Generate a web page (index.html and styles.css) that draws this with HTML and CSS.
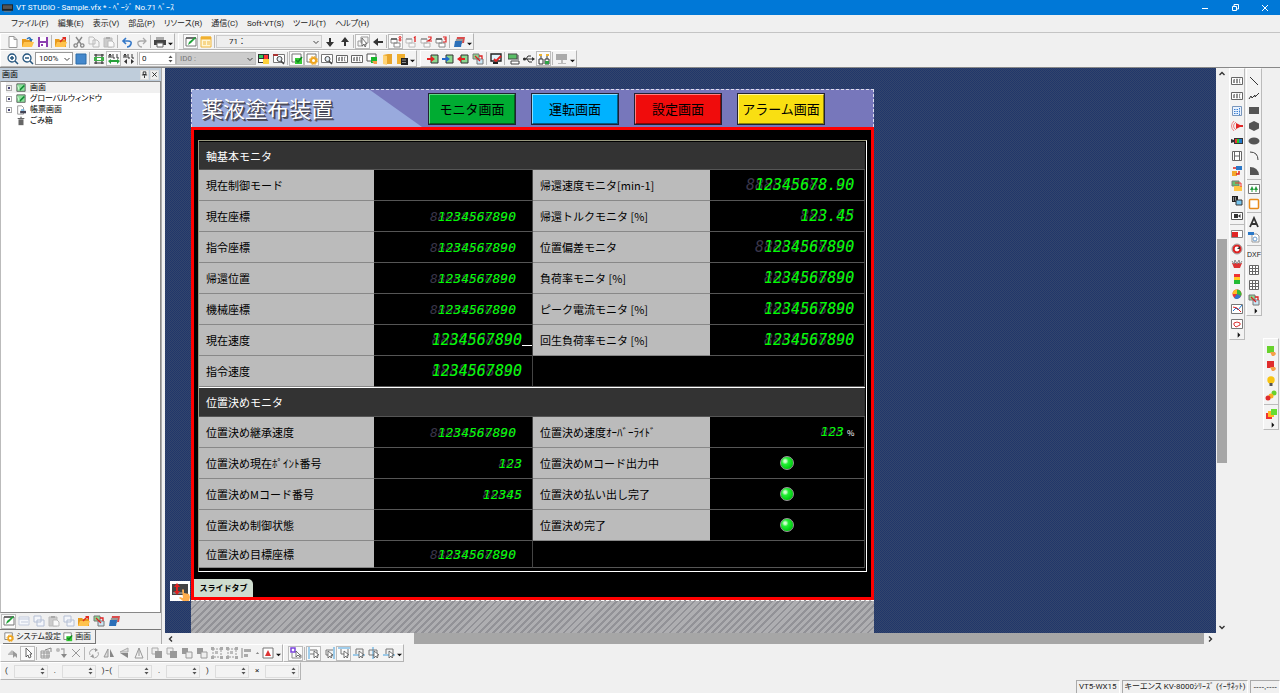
FILE: index.html
```html
<!DOCTYPE html>
<html lang="ja">
<head>
<meta charset="utf-8">
<title>VT STUDIO</title>
<link rel="stylesheet" href="styles.css">
</head>
<body>
<svg class="defs" aria-hidden="true">
<defs>
<symbol id="new" viewBox="0 0 12 12"><path d="M2 .5h5l3 3v8H2zM7 .5v3h3" fill="#fff" stroke="#999"/></symbol>
<symbol id="open" viewBox="0 0 12 12"><path d="M0 3h4l1 1h5v7H0z" fill="#e79a1c"/><path d="M2 6h10l-2 5H0z" fill="#ffc34d"/><path d="M5 3q3-3 4 1" fill="none" stroke="#2672b8" stroke-width="1.5"/><path d="M7 3h4L9 6z" fill="#2672b8"/></symbol>
<symbol id="save" viewBox="0 0 12 12"><path d="M1 1h10v10H1z" fill="#8c3fb0"/><path d="M3 1h6v4H3zM3 7h6v4H3z" fill="#fff"/><path d="M4 8h2v2H4z" fill="#8c3fb0"/></symbol>
<symbol id="folder" viewBox="0 0 12 12"><path d="M0 3h4l1 1h6v7H0z" fill="#e79a1c"/><path d="M2 6h10l-2 5H0z" fill="#ffc34d"/><path d="M5 6l4-4" stroke="#e02c20" stroke-width="1.500"/><path d="M7 1h4v4z" fill="#e02c20"/></symbol>
<symbol id="cut" viewBox="0 0 12 12"><path d="M3 1l5 7M9 1L4 8" stroke="#888" stroke-width="1.4"/><g fill="none" stroke="#888" stroke-width="1.3"><circle cx="2.700" cy="9.500" r="1.700"/><circle cx="9.300" cy="9.500" r="1.700"/></g></symbol>
<symbol id="copy" viewBox="0 0 12 12"><path d="M1 1h4l2 2v5H1zM5 4h4l2 2v5H5z" fill="#f4f4f4" stroke="#bbb"/></symbol>
<symbol id="paste" viewBox="0 0 12 12"><path d="M1 2h8v9H1z" fill="#ccc" stroke="#bbb"/><path d="M3 1h4v2H3z" fill="#aaa"/><path d="M5 5h4l2 2v4H5z" fill="#fafafa" stroke="#bbb"/></symbol>
<symbol id="undo" viewBox="0 0 12 12"><path d="M2 5h5q4 0 3 3-1 3-4 3M5 2L2 5l3 3" fill="none" stroke="#3478c8" stroke-width="1.600"/></symbol>
<symbol id="redo" viewBox="0 0 12 12"><path d="M10 5H5Q1 5 2 8q1 3 4 3M7 2l3 3-3 3" fill="none" stroke="#aaa" stroke-width="1.300"/></symbol>
<symbol id="print" viewBox="0 0 12 12"><path d="M2 1h8v3H2z" fill="#aaa"/><path d="M0 4h12v5H0z" fill="#444"/><path d="M3 7h6v4H3z" fill="#fff" stroke="#666"/></symbol>
<symbol id="edit" viewBox="0 0 12 12"><path d="M1 2h10v8H1z" fill="#fff" stroke="#777"/><path d="M1 2h10" stroke="#555" stroke-width="1.500"/><path d="M3 9l1-3 6-5 1 1-5 5z" fill="#22a33a"/></symbol>
<symbol id="grid" viewBox="0 0 12 12"><path d="M1 1h10v10H1z" fill="#fff6d5" stroke="#f0b840"/><path d="M1 2h10" stroke="#f0b030" stroke-width="3"/><path d="M3 6h3M7 6h3M3 8h3M7 8h3" stroke="#f0b840"/></symbol>
<symbol id="down" viewBox="0 0 12 12"><path d="M5 2h2v4h3l-4 5-4-5h3z" fill="#333"/></symbol>
<symbol id="up" viewBox="0 0 12 12"><path d="M5 10h2V6h3L6 1 2 6h3z" fill="#333"/></symbol>
<symbol id="left" viewBox="0 0 12 12"><path d="M11 5v2H6v3L1 6l5-4v3z" fill="#333"/></symbol>
<symbol id="pick" viewBox="0 0 12 12"><path d="M4 1h7v6H4zM1 5h5v5H1z" fill="#f4f4f4" stroke="#999"/><path d="M5 2v8l2-2 1 3 1-1-1-2h2z" fill="#fff" stroke="#555" stroke-width=".8"/></symbol>
<symbol id="win" viewBox="0 0 12 12"><path d="M1 3h6v4H1zM4 7h6v4H4z" fill="#fff" stroke="#888"/><path d="M1 3h6" stroke="#555" stroke-width="1.500"/></symbol>
<symbol id="n8" viewBox="0 0 12 12"><use href="#win"/><circle cx="10" cy="1.500" r="1" fill="none" stroke="#e02020"/><circle cx="10" cy="4" r="1" fill="none" stroke="#e02020"/></symbol>
<symbol id="n1" viewBox="0 0 12 12"><use href="#win" opacity=".5"/><path d="M9 2l1-1v5" fill="none" stroke="#e02020" stroke-width="1.300"/></symbol>
<symbol id="n2" viewBox="0 0 12 12"><use href="#win" opacity=".6"/><path d="M8 1h3v2L8 5h4" fill="none" stroke="#e02020" stroke-width="1.200"/></symbol>
<symbol id="n3" viewBox="0 0 12 12"><use href="#win"/><path d="M8 1h3v2H9h2v3H8" fill="none" stroke="#e02020" stroke-width="1.200"/></symbol>
<symbol id="layers" viewBox="0 0 12 12"><path d="M4 1h8l-1 6H3z" fill="#d94c4c"/><path d="M3 3h7L9 8H2z" fill="#999"/><path d="M2 5h7l-1 6H1z" fill="#2b6fb8"/></symbol>
<symbol id="zin" viewBox="0 0 12 12"><circle cx="5" cy="5" r="4" fill="#fff" stroke="#25557e" stroke-width="1.300"/><path d="M8 8l3 3M3 5h4M5 3v4" stroke="#25557e" stroke-width="1.500"/></symbol>
<symbol id="zout" viewBox="0 0 12 12"><circle cx="5" cy="5" r="4" fill="#fff" stroke="#25557e" stroke-width="1.300"/><path d="M8 8l3 3M3 5h4" stroke="#25557e" stroke-width="1.500"/></symbol>
<symbol id="blue" viewBox="0 0 12 12"><path d="M1 1h10v10H1z" fill="#4488cc" stroke="#2d6ca8"/></symbol>
<symbol id="fit" viewBox="0 0 12 12"><path d="M1 2h10M1 10h10M3 1v10M9 1v10" stroke="#333" stroke-width="1.200"/><path d="M1 4h10v4H1z" fill="#3fae49"/><path d="M4 5h4v2H4z" fill="#fff"/></symbol>
<symbol id="all" viewBox="0 0 12 12"><path d="M1 5V2l1-1 1 1v3M1 3h2M5 1v4h2M9 1v4h2" fill="none" stroke="#333"/><path d="M0 8l3-2v1h6V6l3 2-3 3V9H3v2z" fill="#239f38"/></symbol>
<symbol id="all2" viewBox="0 0 12 12"><path d="M1 5V2l1-1 1 1v3M1 3h2M5 1v4h2M9 1v4h2" fill="none" stroke="#333"/><path d="M4 6v5L1 8.500zM8 6v5l3-2.500z" fill="#333"/></symbol>
<symbol id="parts" viewBox="0 0 12 12"><path d="M0 1h11v9H0z" fill="#333"/><path d="M1 2h4v3H1z" fill="#36c85a"/><path d="M6 2h4v4H6z" fill="#f33"/><path d="M1 6h4v3H1z" fill="#fff"/><path d="M5 6h6v5H5z" fill="#ffd23c"/></symbol>
<symbol id="find" viewBox="0 0 12 12"><path d="M.5 1.500h11v8H.5z" fill="#fff" stroke="#777"/><circle cx="6.500" cy="6" r="2.500" fill="#e4edf4" stroke="#444"/><path d="M8 8l3 3" stroke="#444" stroke-width="1.500"/></symbol>
<symbol id="find2" viewBox="0 0 12 12"><use href="#find"/><path d="M0 2h5" stroke="#a33" stroke-width="2"/></symbol>
<symbol id="check" viewBox="0 0 12 12"><path d="M1 1h9v8H1z" fill="#fff" stroke="#777"/><path d="M4 5h7v6H4z" fill="#36c936"/><path d="M5 7l2 2 4-5" fill="none" stroke="#108522" stroke-width="1.500"/></symbol>
<symbol id="gear" viewBox="0 0 12 12"><path d="M1 1h9v8H1z" fill="#fff" stroke="#777"/><circle cx="7.500" cy="7.500" r="2.500" fill="#fff" stroke="#efa51d" stroke-width="2"/><circle cx="7.500" cy="7.500" r="4" fill="none" stroke="#efa51d" stroke-dasharray="2 1.100"/></symbol>
<symbol id="abc" viewBox="0 0 12 12"><path d="M.5 2.500h11v7H.5z" fill="#fff" stroke="#666"/><path d="M2.500 8V5l1-1v4M5.500 4v4h1V4zM9.500 4h-1v4h1" fill="none" stroke="#777" stroke-width=".8"/></symbol>
<symbol id="hand" viewBox="0 0 12 12"><path d="M1 1h9v7H1z" fill="#fff" stroke="#555"/><path d="M5 4h6v6H5z" fill="#17b62b"/><path d="M6 8l5 0v3H8z" fill="#f5a04a"/></symbol>
<symbol id="book" viewBox="0 0 12 12"><path d="M2 2l5-1h4v10H2z" fill="#e8a52c"/><path d="M2 2l4 1v9l-4-1z" fill="#ffd375"/></symbol>
<symbol id="book2" viewBox="0 0 12 12"><path d="M1 1h8v10H1z" fill="#f0b030"/><path d="M5 5h7v7H5z" fill="#222"/><path d="M6.500 7h4M6.500 9.500h4" stroke="#fff" stroke-dasharray="1 1"/></symbol>
<symbol id="toin" viewBox="0 0 12 12"><path d="M4 2h7v8H4z" fill="#8bd88f" stroke="#333"/><path d="M0 5h4V3l4 3-4 3V7H0z" fill="#e32222"/></symbol>
<symbol id="toblue" viewBox="0 0 12 12"><path d="M4 2h7v8H4z" fill="#8bd88f" stroke="#333"/><path d="M0 5h4V3l4 3-4 3V7H0z" fill="#2468c8"/></symbol>
<symbol id="toout" viewBox="0 0 12 12"><path d="M4 2h7v8H4z" fill="#8bd88f" stroke="#333"/><path d="M8 5H4V3L0 6l4 3V7h4z" fill="#e32222"/></symbol>
<symbol id="swap" viewBox="0 0 12 12"><path d="M1 1h6v5H1z" fill="#8bd88f" stroke="#777"/><path d="M5 6h6v5H5z" fill="#c9e5f4" stroke="#777"/><path d="M3 3l5 5M7 3h3v3" stroke="#d22" stroke-width="1.300" fill="none"/></symbol>
<symbol id="mon" viewBox="0 0 12 12"><path d="M1 1h10v7H1z" fill="#dff3fb" stroke="#222" stroke-width="1.400"/><path d="M3 10h5" stroke="#222" stroke-width="2"/><path d="M4 6l2 2 5-5" fill="none" stroke="#d22" stroke-width="1.800"/></symbol>
<symbol id="pc" viewBox="0 0 12 12"><path d="M0 1h9v5H0z" fill="#59bd65" stroke="#444"/><path d="M3 8h8v3H3z" fill="#fff" stroke="#444"/><path d="M10 2v5" stroke="#444"/></symbol>
<symbol id="usb" viewBox="0 0 12 12"><path d="M0 6h11M3 6l2-3h3M4 6l2 3h3" fill="none" stroke="#333"/><circle cx="1.500" cy="6" r="1.500" fill="#333"/><path d="M9 4l3 2-3 2z" fill="#333"/></symbol>
<symbol id="conn" viewBox="0 0 12 12"><path d="M1 2h3M8 2h3" stroke="#efb430" stroke-width="2"/><path d="M1 6h4v5H1zM7 6h4v5H7z" fill="#fff" stroke="#333"/><path d="M7 8h4v3H7z" fill="#2fa447"/><path d="M3 3v3M9 3v3" stroke="#333"/></symbol>
<symbol id="gmon" viewBox="0 0 12 12"><path d="M0 1h11v6H0z" fill="#aaa"/><path d="M5 7h2v3H5zM2 10h8v1H2z" fill="#bbb"/></symbol>
<symbol id="cursor" viewBox="0 0 12 12"><path d="M4 1v9l2-2 1 3 2-1-1-3h2z" fill="#fff" stroke="#555" stroke-width=".9"/></symbol>
<symbol id="gcur" viewBox="0 0 12 12"><path d="M1 7l4-4 5 5H1z" fill="#bbb"/><path d="M6 4v7l2-2 2 2V7z" fill="#999"/></symbol>
<symbol id="ggrid" viewBox="0 0 12 12"><path d="M1 4h8v7H1zM1 6h9M1 9h9M4 4v7M7 4v7" fill="none" stroke="#999"/><path d="M5 3l6-2v4" fill="none" stroke="#888"/></symbol>
<symbol id="gdot" viewBox="0 0 12 12"><circle cx="3" cy="3" r="2" fill="#bbb"/><path d="M6 2h3v5" fill="none" stroke="#aaa" stroke-width="1.300"/><path d="M6 7h6l-3 4z" fill="#888"/></symbol>
<symbol id="gx" viewBox="0 0 12 12"><path d="M2 2l8 8M10 2l-8 8" stroke="#999"/></symbol>
<symbol id="rot" viewBox="0 0 12 12"><path d="M2 8a4 4 0 0 1 6-5M10 5a4 4 0 0 1-6 5" fill="none" stroke="#aaa"/><path d="M7 1l3 2-3 2zM5 7l-3 3h4z" fill="#999"/></symbol>
<symbol id="tri" viewBox="0 0 12 12"><path d="M5 2v8H1z" fill="#ddd" stroke="#999"/><path d="M7 2v8h4z" fill="#888"/></symbol>
<symbol id="tri2" viewBox="0 0 12 12"><path d="M10 1v4H2z" fill="#ddd" stroke="#aaa"/><path d="M10 11V6H2z" fill="#888"/></symbol>
<symbol id="tri3" viewBox="0 0 12 12"><path d="M6 1L2 11h8zM6 1v8" fill="none" stroke="#999"/></symbol>
<symbol id="sq" viewBox="0 0 12 12"><path d="M1 1h6v6H1z" fill="#999"/><path d="M5 5h6v6H5z" fill="#eee" stroke="#999"/></symbol>
<symbol id="sq2" viewBox="0 0 12 12"><path d="M1 1h6v6H1z" fill="#eee" stroke="#aaa"/><path d="M4 4h7v7H4z" fill="#999"/></symbol>
<symbol id="grp" viewBox="0 0 12 12"><path d="M2 2h8v8H2z" fill="none" stroke="#999" stroke-dasharray="2 1"/><path d="M0 0h3v3H0zM9 0h3v3H9zM0 9h3v3H0zM9 9h3v3H9z" fill="#aaa"/><path d="M4 4h3v3H4z" fill="#bbb"/></symbol>
<symbol id="aln" viewBox="0 0 12 12"><path d="M1 1v10" stroke="#888"/><path d="M3 2h7v3H3zM3 7h4v3H3z" fill="#aaa"/></symbol>
<symbol id="ared" viewBox="0 0 12 12"><path d="M1 1h10v10H1z" fill="#fff" stroke="#777"/><path d="M6 3l3 6H3z" fill="#d33"/></symbol>
<symbol id="selp" viewBox="0 0 12 12"><path d="M1 1h4v4H1z" fill="#fff" stroke="#7a42dc" stroke-width="1.500"/><path d="M2 6v5h9V8H6" fill="none" stroke="#888"/><path d="M6 4v6l2-2 2 2V8z" fill="#fff" stroke="#555" stroke-width=".8"/></symbol>
<symbol id="sell" viewBox="0 0 12 12"><path d="M1 0v12" stroke="#45a0dd"/><path d="M2 3h7v4H2" fill="none" stroke="#777"/><path d="M6 4v7l2-2 1 2 1-1-1-2h2z" fill="#fff" stroke="#555" stroke-width=".8"/></symbol>
<symbol id="selr" viewBox="0 0 12 12"><path d="M11 0v12" stroke="#45a0dd"/><path d="M10 3H3v5h7" fill="none" stroke="#777"/><path d="M5 4v7l2-2 1 2 1-1-1-2h2z" fill="#fff" stroke="#555" stroke-width=".8"/></symbol>
<symbol id="selb" viewBox="0 0 12 12"><path d="M0 8h12" stroke="#45a0dd"/><path d="M3 7V2h7v5" fill="none" stroke="#777"/><path d="M6 4v7l2-2 1 2 1-1-1-2h2z" fill="#fff" stroke="#555" stroke-width=".8"/></symbol>
<symbol id="selc" viewBox="0 0 12 12"><path d="M5 0v12" stroke="#45a0dd"/><path d="M1 3h8v5H1z" fill="none" stroke="#777"/><path d="M6 4v7l2-2 1 2 1-1-1-2h2z" fill="#fff" stroke="#555" stroke-width=".8"/></symbol>
<symbol id="selt" viewBox="0 0 12 12"><path d="M0 1h12" stroke="#45a0dd"/><path d="M3 2v5h7V2" fill="none" stroke="#777"/><path d="M6 4v7l2-2 1 2 1-1-1-2h2z" fill="#fff" stroke="#555" stroke-width=".8"/></symbol>
<symbol id="line" viewBox="0 0 12 12"><path d="M2 2l8 8" stroke="#333"/></symbol>
<symbol id="zig" viewBox="0 0 12 12"><path d="M1 9l2-3 1 2 3-3v2l4-4" fill="none" stroke="#333"/></symbol>
<symbol id="rect" viewBox="0 0 12 12"><path d="M1 2h10v7H1z" fill="#555"/></symbol>
<symbol id="hex" viewBox="0 0 12 12"><path d="M6 1l5 2.500v5L6 11 1 8.500v-5z" fill="#555"/></symbol>
<symbol id="ell" viewBox="0 0 12 12"><ellipse cx="6" cy="6" rx="5.500" ry="3.500" fill="#555"/></symbol>
<symbol id="arc" viewBox="0 0 12 12"><path d="M2 2q8 0 8 8" fill="none" stroke="#444"/></symbol>
<symbol id="fan" viewBox="0 0 12 12"><path d="M2 2q8 0 9 8H2z" fill="#555"/></symbol>
<symbol id="pic" viewBox="0 0 12 12"><path d="M.5 1.500h11v9H.5z" fill="#fff" stroke="#777"/><path d="M4 3l2 4H4.500v2h-1V7H2zM8 3l2 4H8.500v2h-1V7H6z" fill="#239b3c"/></symbol>
<symbol id="org" viewBox="0 0 12 12"><rect x="1.500" y="1.500" width="9" height="9" rx="1" fill="#fff" stroke="#e88a1a" stroke-width="1.500"/></symbol>
<symbol id="biga" viewBox="0 0 12 12"><path d="M2 11L6 2l4 9M3.500 8h5" fill="none" stroke="#333" stroke-width="1.800"/></symbol>
<symbol id="doc" viewBox="0 0 12 12"><path d="M4 3h5l2 2v6H4z" fill="#fff" stroke="#999"/><path d="M0 1h6v3H0z" fill="#2a78c8"/><circle cx="7" cy="8" r="2" fill="none" stroke="#6b9ccc"/></symbol>
<symbol id="tbl" viewBox="0 0 12 12"><path d="M1.500 1.500h9v9h-9zM1.500 4.500h9M1.500 7.500h9M4.500 1.500v9M7.500 1.500v9" fill="#fff" stroke="#666"/></symbol>
<symbol id="list" viewBox="0 0 12 12"><path d="M1.500 1.500h9v9h-9z" fill="#eaf3ff" stroke="#7795bb"/><path d="M3 4.500h4M3 6.500h4M3 8.500h4M8.500 3v7" stroke="#3b7fd0" stroke-dasharray="1 .5"/></symbol>
<symbol id="sound" viewBox="0 0 12 12"><path d="M5 2q-5 4 0 8M3 1q-5 5 0 10" fill="none" stroke="#f08080"/><path d="M5 3l4 2h3v2H9l-4 2z" fill="#e02626"/></symbol>
<symbol id="cam" viewBox="0 0 12 12"><path d="M3 3h9v6H3zM0 4l3 1v2L0 8z" fill="#333"/><path d="M4 4h2v4H4z" fill="#e33"/><path d="M6 4h2v4H6z" fill="#2c2"/><path d="M8 4h3v4H8z" fill="#27c"/></symbol>
<symbol id="film" viewBox="0 0 12 12"><path d="M1.500 1.500h9v9h-9zM3.500 1v10M8.500 1v10M4 6h4" fill="#fff" stroke="#666"/></symbol>
<symbol id="move" viewBox="0 0 12 12"><path d="M5 1h6v4H5z" fill="#2a78c8"/><path d="M1 6h5v5H1z" fill="#f2a72c"/><path d="M8 6v3H5M2 3h3" stroke="#d22" stroke-width="1.500" fill="none"/></symbol>
<symbol id="mail" viewBox="0 0 12 12"><path d="M1 1h7v5H1z" fill="#65c272" stroke="#777"/><path d="M3 6h8v5H3z" fill="#ffc545"/><path d="M4 3h6v4" fill="none" stroke="#e33"/></symbol>
<symbol id="rem" viewBox="0 0 12 12"><path d="M1 1h6v6H1z" fill="#222"/><path d="M2 3h4M2 5h4" stroke="#fff" stroke-dasharray="1 1"/><path d="M5 5h6v5H5z" fill="#76c4ee" stroke="#333"/></symbol>
<symbol id="vid" viewBox="0 0 12 12"><path d="M.5 2.500h11v7H.5z" fill="#fff" stroke="#555"/><path d="M3 4h4v4H3zM9.500 4v4L7 6z" fill="#333"/></symbol>
<symbol id="bar" viewBox="0 0 12 12"><path d="M.5 2.500h11v7H.5z" fill="#fff" stroke="#888"/><path d="M1 4h6v5H1z" fill="#e02626"/></symbol>
<symbol id="met" viewBox="0 0 12 12"><circle cx="6" cy="6" r="3.500" fill="#fff" stroke="#d22" stroke-width="2.200"/><circle cx="6" cy="6" r="5" fill="none" stroke="#777" stroke-width=".7"/><path d="M6 6l3-3v3z" fill="#333"/></symbol>
<symbol id="crown" viewBox="0 0 12 12"><path d="M1 5h10l-2 5H3z" fill="#d33"/><path d="M1 3l2 3 1-4 2 4 2-4 1 4 2-3" fill="none" stroke="#888"/></symbol>
<symbol id="sig" viewBox="0 0 12 12"><path d="M3 1h6v3H3z" fill="#e33"/><path d="M3 4h6v3H3z" fill="#fc2"/><path d="M3 7h6v4H3z" fill="#2b3"/></symbol>
<symbol id="pie" viewBox="0 0 12 12"><circle cx="6" cy="6" r="4.500" fill="#e33"/><path d="M6 6V1.500A4.500 4.500 0 0 1 10 8z" fill="#3b3"/><path d="M6 6l4 2a4.500 4.500 0 0 1-7 2z" fill="#37c"/><path d="M6 6V1.500A4.500 4.500 0 0 0 1.500 6z" fill="#fb2"/></symbol>
<symbol id="gr1" viewBox="0 0 12 12"><path d="M.5 1.500h11v9H.5z" fill="#fff" stroke="#777"/><path d="M2 8l3-3 2 2 4-5" fill="none" stroke="#27c"/><path d="M2 4l4 1 4 4" fill="none" stroke="#d22"/></symbol>
<symbol id="gr2" viewBox="0 0 12 12"><path d="M.5 1.500h11v9H.5z" fill="#fff" stroke="#777"/><path d="M3 5l3-1 3 1v2L5 9 3 7z" fill="none" stroke="#d33"/></symbol>
<symbol id="sgr" viewBox="0 0 12 12"><path d="M2 1h7v7H2z" fill="#68d22c"/><path d="M5 7h5l1 2-2 2H7z" fill="#f5a04a"/></symbol>
<symbol id="srd" viewBox="0 0 12 12"><path d="M2 1h7v7H2z" fill="#e02c2c"/><path d="M5 7h5l1 2-2 2H7z" fill="#f5a04a"/></symbol>
<symbol id="bulb" viewBox="0 0 12 12"><circle cx="6" cy="5" r="3.700" fill="#f7c412"/><path d="M4.500 8h3v3h-3z" fill="#555"/></symbol>
<symbol id="pill" viewBox="0 0 12 12"><circle cx="9" cy="3" r="2.500" fill="#68d22c"/><circle cx="6" cy="6" r="2.500" fill="#f7b020"/><circle cx="3" cy="8" r="2.500" fill="#e02c2c"/></symbol>
<symbol id="stack" viewBox="0 0 12 12"><path d="M1 5h6v6H1z" fill="#e33"/><path d="M3 3h6v6H3z" fill="#fb2"/><path d="M6 1h6v6H6z" fill="#6d3"/></symbol>
<symbol id="scr" viewBox="0 0 12 12"><path d="M1 1h10v9H1z" fill="#8be09a" stroke="#555"/><path d="M4 9l6-6" stroke="#0d8a30" stroke-width="2"/><path d="M2 3l2 6" stroke="#e8ffe8"/></symbol>
<symbol id="rep" viewBox="0 0 12 12"><path d="M2 1h5l2 2v8H2z" fill="#fff" stroke="#888"/><path d="M5 7h7v3H5z" fill="#445"/><path d="M6 5h4v2H6z" fill="#79b7e0"/></symbol>
<symbol id="bin" viewBox="0 0 12 12"><path d="M3 4h6v7H3z" fill="#666"/><path d="M2 3h8M5 1.500h2" stroke="#666" stroke-width="1.400"/></symbol>
<symbol id="lgrid" viewBox="0 0 12 12"><path d="M1 2h10v8H1zM1 4h10M3 7h7" fill="#f6f8fc" stroke="#c3cbdc"/></symbol>
<symbol id="lcopy" viewBox="0 0 12 12"><path d="M1 1h7v6H1zM4 5h7v6H4z" fill="#f4f6fb" stroke="#b4bfd4"/></symbol>
<symbol id="caret" viewBox="0 0 6 12"><path d="M0 7h6l-3 3z" fill="#111"/></symbol>
<symbol id="caretr" viewBox="0 0 12 12"><path d="M7 2v8l4-4z" fill="#111"/></symbol>
<symbol id="chev" viewBox="0 0 8 8"><path d="M1.500 3L4 5.500 6.500 3" fill="none" stroke="#444"/></symbol>
<symbol id="spin" viewBox="0 0 7 10"><path d="M1.500 4l2-2.500 2 2.500zM1.500 6l2 2.500 2-2.500z" fill="#555"/></symbol>
</defs>
</svg>

<div class="app">
<header class="title">
  <svg class="logo" viewBox="0 0 12 10"><path d="M0 1h12v7H0z" fill="#222"/><path d="M1 2h10v4H1z" fill="#555"/><path d="M2 9h8" stroke="#777"/></svg>
  <h1>VT STUDIO - Sample.vfx * - ﾍﾟｰｼﾞ No.71 ﾍﾞｰｽ</h1>
  <div class="wins">
    <button aria-label="最小化"><svg viewBox="0 0 8 8"><path d="M1 4.500h6" stroke="#fff"/></svg></button>
    <button aria-label="元に戻す"><svg viewBox="0 0 8 8"><path d="M1.500 2.500h4v4h-4zM3 2V.500h4.500V5H6" fill="none" stroke="#fff"/></svg></button>
    <button aria-label="閉じる"><svg viewBox="0 0 8 8"><path d="M1 1l6 6M7 1L1 7" stroke="#fff"/></svg></button>
  </div>
</header>
<nav class="menu">
  <button>ファイル(F)</button><button>編集(E)</button><button>表示(V)</button><button>部品(P)</button><button>リソース(R)</button><button>通信(C)</button><button>Soft-VT(S)</button><button>ツール(T)</button><button>ヘルプ(H)</button>
</nav>
<div class="bars">
  <div class="bar">
    <button aria-label="新規"><svg><use href="#new"/></svg></button><button aria-label="開く"><svg><use href="#open"/></svg></button><button aria-label="保存"><svg><use href="#save"/></svg></button><i></i>
    <button aria-label="フォルダ"><svg><use href="#folder"/></svg></button><i></i>
    <button aria-label="切り取り"><svg><use href="#cut"/></svg></button><button aria-label="コピー"><svg><use href="#copy"/></svg></button><button aria-label="貼り付け"><svg><use href="#paste"/></svg></button><i></i>
    <button aria-label="元へ"><svg><use href="#undo"/></svg></button><button aria-label="やり直し"><svg><use href="#redo"/></svg></button><i></i>
    <button aria-label="印刷"><svg><use href="#print"/></svg></button><button class="more" aria-label="その他"><svg><use href="#caret"/></svg></button>
  </div>
  <div class="bar gap">
    <button aria-label="画面編集" class="on"><svg><use href="#edit"/></svg></button><button aria-label="一覧"><svg><use href="#grid"/></svg></button><i></i>
    <span class="combo page"><select aria-label="ページ"><option>71 ：</option></select><svg><use href="#chev"/></svg></span>
    <button aria-label="次"><svg><use href="#down"/></svg></button><button aria-label="前"><svg><use href="#up"/></svg></button><i></i>
    <button aria-label="選択" class="on"><svg><use href="#pick"/></svg></button><button aria-label="戻る"><svg><use href="#left"/></svg></button><i></i>
    <button aria-label="窓" class="on"><svg><use href="#n8"/></svg></button><button aria-label="窓1"><svg><use href="#n1"/></svg></button><button aria-label="窓2"><svg><use href="#n2"/></svg></button><button aria-label="窓3"><svg><use href="#n3"/></svg></button><i></i>
    <button aria-label="レイヤ"><svg><use href="#layers"/></svg></button><button class="more" aria-label="その他"><svg><use href="#caret"/></svg></button>
  </div>
</div>
<div class="bars">
  <div class="bar">
    <button aria-label="拡大"><svg><use href="#zin"/></svg></button><button aria-label="縮小"><svg><use href="#zout"/></svg></button>
    <span class="combo zoom"><select aria-label="倍率"><option>100%</option></select><svg><use href="#chev"/></svg></span>
    <button aria-label="全体"><svg><use href="#blue"/></svg></button><i></i>
    <button aria-label="グリッド"><svg><use href="#fit"/></svg></button><button aria-label="全幅" class="on"><svg><use href="#all"/></svg></button><button aria-label="全間隔"><svg><use href="#all2"/></svg></button><i></i>
    <span class="num"><input aria-label="番号" value="0"><svg><use href="#spin"/></svg></span>
    <span class="combo id"><select aria-label="ID" disabled><option>ID0 :</option></select><svg><use href="#chev"/></svg></span>
    <button aria-label="部品"><svg><use href="#parts"/></svg></button><button aria-label="検索"><svg><use href="#find2"/></svg></button><i></i>
    <button aria-label="確認" class="on"><svg><use href="#check"/></svg></button><button aria-label="設定" class="on"><svg><use href="#gear"/></svg></button><button aria-label="探す"><svg><use href="#find"/></svg></button><button aria-label="文字"><svg><use href="#abc"/></svg></button><button aria-label="カウンタ"><svg><use href="#abc"/></svg></button><button aria-label="スイッチ"><svg><use href="#hand"/></svg></button><button aria-label="ライブラリ"><svg><use href="#book"/></svg></button><button aria-label="登録"><svg><use href="#book2"/></svg></button><button class="more" aria-label="その他"><svg><use href="#caret"/></svg></button>
  </div>
  <div class="bar gap">
    <button aria-label="転送"><svg><use href="#toin"/></svg></button><button aria-label="送信"><svg><use href="#toblue"/></svg></button><button aria-label="受信"><svg><use href="#toout"/></svg></button><button aria-label="照合"><svg><use href="#swap"/></svg></button><i></i>
    <button aria-label="モニタ"><svg><use href="#mon"/></svg></button><i></i>
    <button aria-label="PC"><svg><use href="#pc"/></svg></button><button aria-label="USB"><svg><use href="#usb"/></svg></button><button aria-label="接続" class="on"><svg><use href="#conn"/></svg></button><i></i>
    <button aria-label="表示"><svg><use href="#gmon"/></svg></button><button class="more" aria-label="その他"><svg><use href="#caret"/></svg></button>
  </div>
</div>

<main class="work">
  <aside class="side">
    <div class="side-head"><h2>画面</h2><button aria-label="固定"><svg viewBox="0 0 8 8"><path d="M2.500 1h3v3h-3zM1 4.500h6M4 5v3" fill="none" stroke="#222"/></svg></button><button aria-label="閉じる"><svg viewBox="0 0 8 8"><path d="M1.500 1.500l5 5M6.500 1.500l-5 5" stroke="#222"/></svg></button></div>
    <ul class="tree">
      <li class="sel"><span class="plus"></span><svg><use href="#scr"/></svg>画面</li>
      <li><span class="plus"></span><svg><use href="#scr"/></svg>グローバルウィンドウ</li>
      <li><span class="plus"></span><svg><use href="#rep"/></svg>帳票画面</li>
      <li><span class="noplus"></span><svg><use href="#bin"/></svg>ごみ箱</li>
    </ul>
    <div class="side-tools"><button aria-label="編集" class="on"><svg><use href="#edit"/></svg></button><button aria-label="表"><svg><use href="#lgrid"/></svg></button><button aria-label="複写"><svg><use href="#lcopy"/></svg></button><button aria-label="貼付"><svg><use href="#paste"/></svg></button><button aria-label="変更"><svg><use href="#lcopy"/></svg></button><button aria-label="フォルダ"><svg><use href="#folder"/></svg></button><button aria-label="照合"><svg><use href="#swap"/></svg></button><button aria-label="レイヤ"><svg><use href="#layers"/></svg></button></div>
    <div class="side-tabs"><button><svg><use href="#gear"/></svg>システム設定</button><button class="cur"><svg><use href="#check"/></svg>画面</button></div>
  </aside>

  <section class="view">
    <div class="canvas">
      <div class="gutter"><svg viewBox="0 0 20 20"><path d="M0 0h20v20H0z" fill="#fff"/><path d="M2 3h16v11H2z" fill="#444"/><path d="M3 12h10" stroke="#bbb"/><path d="M7 2l3 4H8v4h2l-3 4-3-4h2V6H4z" fill="#e02020"/><path d="M12 9l1-1 1 1v3l5 1 1 3-1 4h-6l-4-3 1-1 3 1z" fill="#ffad4d"/></svg></div>
      <div class="device">
        <div class="banner"><div class="name">薬液塗布装置</div>
          <div class="keys"><button class="g">モニタ画面</button><button class="b">運転画面</button><button class="r">設定画面</button><button class="y">アラーム画面</button></div>
        </div>
        <div class="frame">
          <table>
            <colgroup><col class="c1"><col class="c2"><col class="c3"><col></colgroup>
            <tbody>
            <tr class="cap first"><th colspan="4">軸基本モニタ</th></tr>
            <tr><th>現在制御モード</th><td></td><th>帰還速度モニタ[min-1]</th><td><output class="led" data-off="888888888 88">12345678.90</output></td></tr>
            <tr><th>現在座標</th><td><output class="led sm in" data-off="88888888888">1234567890</output></td><th>帰還トルクモニタ [%]</th><td><output class="led" data-off="888 88">123.45</output></td></tr>
            <tr><th>指令座標</th><td><output class="led sm in" data-off="88888888888">1234567890</output></td><th>位置偏差モニタ</th><td><output class="led" data-off="88888888888">1234567890</output></td></tr>
            <tr><th>帰還位置</th><td><output class="led sm in" data-off="88888888888">1234567890</output></td><th>負荷率モニタ [%]</th><td><output class="led" data-off="8888888888">1234567890</output></td></tr>
            <tr><th>機械座標</th><td><output class="led sm in" data-off="88888888888">1234567890</output></td><th>ピーク電流モニタ [%]</th><td><output class="led" data-off="8888888888">1234567890</output></td></tr>
            <tr><th>現在速度</th><td class="dash"><output class="led" data-off="8888888888">1234567890</output></td><th>回生負荷率モニタ [%]</th><td><output class="led" data-off="8888888888">1234567890</output></td></tr>
            <tr><th>指令速度</th><td><output class="led" data-off="8888888888">1234567890</output></td><td colspan="2"></td></tr>
            <tr class="cap"><th colspan="4">位置決めモニタ</th></tr>
            <tr><th>位置決め継承速度</th><td><output class="led sm in" data-off="88888888888">1234567890</output></td><th>位置決め速度ｵｰﾊﾞｰﾗｲﾄﾞ</th><td><output class="led sm" data-off="888">123</output><span class="pct">%</span></td></tr>
            <tr><th>位置決め現在ﾎﾟｲﾝﾄ番号</th><td><output class="led sm" data-off="888">123</output></td><th>位置決めMコード出力中</th><td class="mid"><span class="lamp"></span></td></tr>
            <tr><th>位置決めMコード番号</th><td><output class="led sm" data-off="88888">12345</output></td><th>位置決め払い出し完了</th><td class="mid"><span class="lamp"></span></td></tr>
            <tr><th>位置決め制御状態</th><td></td><th>位置決め完了</th><td class="mid"><span class="lamp"></span></td></tr>
            <tr class="last"><th>位置決め目標座標</th><td><output class="led sm in" data-off="88888888888">1234567890</output></td><td colspan="2"></td></tr>
            </tbody>
          </table>
          <button class="slide">スライドタブ</button>
        </div>
        <div class="hatch"></div>
      </div>
    </div>
    <div class="vs"><svg viewBox="0 0 8 8"><path d="M1.500 5L4 2.500 6.500 5" fill="none" stroke="#333" stroke-width="1.400"/></svg><div class="track"><div class="thumb"></div></div><svg viewBox="0 0 8 8"><path d="M1.500 3L4 5.500 6.500 3" fill="none" stroke="#333" stroke-width="1.400"/></svg></div>
    <div class="hs"><svg viewBox="0 0 8 8"><path d="M5 1.500L2.500 4 5 6.500" fill="none" stroke="#333" stroke-width="1.400"/></svg><div class="track"><div class="thumb"></div></div><svg viewBox="0 0 8 8"><path d="M3 1.500L5.500 4 3 6.500" fill="none" stroke="#333" stroke-width="1.400"/></svg></div>
  </section>

  <div class="docks">
    <div class="dock">
      <button aria-label="数値"><svg><use href="#abc"/></svg></button><button aria-label="文字"><svg><use href="#abc"/></svg></button><button aria-label="リスト"><svg><use href="#list"/></svg></button><button aria-label="音"><svg><use href="#sound"/></svg></button><button aria-label="カメラ"><svg><use href="#cam"/></svg></button><button aria-label="動画"><svg><use href="#film"/></svg></button><button aria-label="移動"><svg><use href="#move"/></svg></button><button aria-label="メール"><svg><use href="#mail"/></svg></button><button aria-label="遠隔"><svg><use href="#rem"/></svg></button><button aria-label="ビデオ"><svg><use href="#vid"/></svg></button><i></i>
      <button aria-label="バー"><svg><use href="#bar"/></svg></button><button aria-label="メータ"><svg><use href="#met"/></svg></button><button aria-label="計器"><svg><use href="#crown"/></svg></button><button aria-label="積層"><svg><use href="#sig"/></svg></button><button aria-label="円"><svg><use href="#pie"/></svg></button><button aria-label="折線"><svg><use href="#gr1"/></svg></button><button aria-label="閉図"><svg><use href="#gr2"/></svg></button><button class="tail" aria-label="その他"><svg><use href="#caretr"/></svg></button>
    </div>
    <div class="dock">
      <button aria-label="直線"><svg><use href="#line"/></svg></button><button aria-label="連続線"><svg><use href="#zig"/></svg></button><button aria-label="四角"><svg><use href="#rect"/></svg></button><button aria-label="多角形"><svg><use href="#hex"/></svg></button><button aria-label="楕円"><svg><use href="#ell"/></svg></button><button aria-label="円弧"><svg><use href="#arc"/></svg></button><button aria-label="扇形"><svg><use href="#fan"/></svg></button><i></i>
      <button aria-label="画像"><svg><use href="#pic"/></svg></button><button aria-label="枠"><svg><use href="#org"/></svg></button><i></i>
      <button aria-label="文字列"><svg><use href="#biga"/></svg></button><button aria-label="文書"><svg><use href="#doc"/></svg></button><i></i>
      <button class="dxf">DXF</button><button aria-label="表"><svg><use href="#tbl"/></svg></button><button aria-label="表2"><svg><use href="#tbl"/></svg></button><button aria-label="交換"><svg><use href="#swap"/></svg></button><button class="tail" aria-label="その他"><svg><use href="#caretr"/></svg></button>
    </div>
    <div class="dock low">
      <button aria-label="スイッチ1"><svg><use href="#sgr"/></svg></button><button aria-label="スイッチ2"><svg><use href="#srd"/></svg></button><button aria-label="ランプ"><svg><use href="#bulb"/></svg></button><button aria-label="多段"><svg><use href="#pill"/></svg></button><i></i><button aria-label="重ね"><svg><use href="#stack"/></svg></button><button class="tail" aria-label="その他"><svg><use href="#caretr"/></svg></button>
    </div>
  </div>
</main>

<div class="bars bottom">
  <div class="bar">
    <button aria-label="対象"><svg><use href="#gcur"/></svg></button><button aria-label="選択" class="on"><svg><use href="#cursor"/></svg></button><i></i>
    <button aria-label="格子"><svg><use href="#ggrid"/></svg></button><button aria-label="変換"><svg><use href="#gdot"/></svg></button><button aria-label="削除"><svg><use href="#gx"/></svg></button><i></i>
    <button aria-label="回転"><svg><use href="#rot"/></svg></button><button aria-label="左右反転"><svg><use href="#tri"/></svg></button><button aria-label="上下反転"><svg><use href="#tri2"/></svg></button><button aria-label="頂点"><svg><use href="#tri3"/></svg></button><i></i>
    <button aria-label="最前面"><svg><use href="#sq2"/></svg></button><button aria-label="前面"><svg><use href="#sq2"/></svg></button><button aria-label="背面"><svg><use href="#sq"/></svg></button><button aria-label="最背面"><svg><use href="#sq"/></svg></button><button aria-label="グループ"><svg><use href="#grp"/></svg></button><button aria-label="解除"><svg><use href="#grp"/></svg></button><button aria-label="整列"><svg><use href="#aln"/></svg></button><button class="more" aria-label="整列の種類"><svg viewBox="0 0 6 12"><path d="M1 7l2-2 2 2z" fill="#666"/></svg></button><button aria-label="書式"><svg><use href="#ared"/></svg></button><button class="more" aria-label="その他"><svg><use href="#caret"/></svg></button>
  </div>
  <div class="bar">
    <button aria-label="図形" class="on"><svg><use href="#selp"/></svg></button><i></i><button aria-label="左" class="on"><svg><use href="#sell"/></svg></button><button aria-label="右"><svg><use href="#selr"/></svg></button><button aria-label="上" class="on"><svg><use href="#selt"/></svg></button><button aria-label="下"><svg><use href="#selb"/></svg></button><button aria-label="中"><svg><use href="#selc"/></svg></button><button aria-label="央"><svg><use href="#selb"/></svg></button><button class="more" aria-label="その他"><svg><use href="#caret"/></svg></button>
  </div>
</div>
<div class="bars bottom">
  <div class="bar coords">
    <span>(</span><span class="num"><input aria-label="X1"><svg><use href="#spin"/></svg></span><span>.</span><span class="num"><input aria-label="Y1"><svg><use href="#spin"/></svg></span><span>)−(</span><span class="num"><input aria-label="X2"><svg><use href="#spin"/></svg></span><span>.</span><span class="num"><input aria-label="Y2"><svg><use href="#spin"/></svg></span><span>)</span><span class="num"><input aria-label="幅"><svg><use href="#spin"/></svg></span><span>×</span><span class="num"><input aria-label="高さ"><svg><use href="#spin"/></svg></span>
  </div>
</div>
<footer class="status"><span>VT5-WX15</span><span>キーエンス KV-8000ｼﾘｰｽﾞ (ｲｰｻﾈｯﾄ)</span><span class="pos">----,----</span></footer>
</div>
</body>
</html>
```
FILE: styles.css
```css
* { box-sizing: border-box; }
body { margin: 0; background: #f0f0f0; color: #222; font: 8px/12px Roboto, "Noto Sans CJK JP", sans-serif; font-feature-settings: "palt"; }
button, input, select { font: inherit; font-feature-settings: inherit; color: inherit; margin: 0; padding: 0; border: 0; background: none; border-radius: 0; }
h1, h2, ul { margin: 0; padding: 0; font-size: inherit; font-weight: 400; list-style: none; }
svg { display: block; flex: none; }
.defs { position: absolute; width: 0; height: 0; }
.app { display: flex; flex-direction: column; min-height: 100vh; }

.title { display: flex; align-items: center; height: 15px; background: #0078d7; color: #fff; padding-left: 2px; gap: 3px; }
.logo { width: 11px; height: 10px; }
.title h1 { flex: 1; }
.wins { display: flex; }
.wins button { width: 30px; height: 15px; display: grid; place-items: center; }
.wins svg { width: 8px; height: 8px; }

.menu { display: flex; height: 18px; align-items: center; gap: 9px; padding-left: 11px; border-bottom: 1px solid #c4c4c4; }

.bars { display: flex; height: 17px; align-items: stretch; }
.bar { display: flex; align-items: center; padding: 0 1px 0 4px; border: 1px solid #fff; border-right-color: #b4b4b4; border-bottom-color: #b4b4b4; background: #f3f3f3; }
.bar.gap { margin-left: 3px; }
.bar button { width: 15px; height: 15px; display: grid; place-items: center; flex: none; }
.bar button svg { width: 12px; height: 12px; }
.bar button.more { width: 6px; }
.bar button.more svg { width: 5px; }
.bar i { width: 1px; height: 13px; margin: 0 1px; background: #b8b8b8; flex: none; }
.bar .on, .side-tools .on { background: #fafafa; border: 1px solid #bdbdbd; }
.combo { position: relative; display: flex; align-items: center; height: 13px; background: #fff; border: 1px solid #999; }
.combo select { appearance: none; width: 100%; height: 11px; padding: 0 3px; line-height: 11px; opacity: 1; }
.combo svg, .num svg { position: absolute; right: 1px; width: 8px; height: 8px; pointer-events: none; }
.page { width: 106px; background: #eee; border-color: #ccc; }
.page select { padding-left: 12px; }
.zoom { width: 38px; }
.id { width: 80px; background: #ccc; border-color: #bbb; color: #777; }
.num { position: relative; display: flex; align-items: center; width: 37px; height: 13px; background: #fff; border: 1px solid #bbb; }
.num input { width: 100%; height: 11px; padding-left: 2px; }
.num svg { width: 7px; height: 10px; }

.work { flex: 1; display: flex; min-height: 0; border-top: 1px solid #888; }
.side { width: 162px; display: flex; flex-direction: column; border-right: 1px solid #aaa; margin-right: 3px; }
.side-head { display: flex; height: 13px; align-items: center; background: #bfcddb; padding: 0 2px; gap: 1px; color: #000; }
.side-head h2 { flex: 1; }
.side-head button { width: 9px; height: 10px; display: grid; place-items: center; border: 1px solid #ddd; background: #eee; }
.side-head svg { width: 7px; height: 7px; }
.tree { flex: 1; background: #fff; border: 1px solid #888; border-left-color: #bbb; }
.tree li { display: flex; align-items: center; height: 11px; margin-left: 5px; gap: 4px; color: #000; line-height: 11px; }
.tree svg { width: 10px; height: 10px; }
.tree .sel { background: #f0f0f0; }
.plus { width: 6px; height: 6px; border: 1px solid #aaa; background: linear-gradient(#447, #447) center / 2px 2px no-repeat; }
.noplus { width: 6px; }
.side-tools { display: flex; height: 17px; align-items: center; padding-left: 1px; border-bottom: 1px solid #777; }
.side-tools button { width: 15px; height: 15px; display: grid; place-items: center; }
.side-tools svg { width: 12px; height: 12px; }
.side-tabs { display: flex; height: 14px; padding-left: 3px; }
.side-tabs button { display: flex; align-items: center; gap: 2px; padding: 0 1px; border-bottom: 1px solid #777; }
.side-tabs .cur { border-right: 1px solid #777; padding-right: 4px; }
.side-tabs svg { width: 10px; height: 10px; }

.view { flex: 1; min-width: 0; display: grid; grid-template: 1fr 11px / 1fr 12px; }
.canvas { display: grid; grid-template-columns: 26px 2fr 1fr; padding-top: 21px; background: repeating-conic-gradient(#21376a 0 25%, #33456c 0 50%) 0 0 / 2px 2px; }
.gutter { display: flex; align-items: flex-end; justify-content: flex-end; padding: 0 1px 32px 0; }
.gutter svg { width: 20px; height: 20px; }
.device { display: flex; flex-direction: column; font-family: "Noto Sans CJK JP", sans-serif; font-feature-settings: normal; }
.banner { display: flex; align-items: center; height: 38px; border: 1px dashed #dde; border-bottom: 0; background: #7777bb; }
.name { width: 230px; height: 37px; padding-left: 9px; background: #99aadd; clip-path: polygon(0 0, 178px 0, 100% 100%, 0 100%); color: #fff; font-size: 22px; line-height: 35px; text-shadow: 1px 1px #445, 2px 2px #556; }
.keys { display: flex; gap: 15px; padding-left: 6px; }
.keys button { width: 88px; height: 32px; border: 2px solid; outline: 1px solid #223; outline-offset: -1px; font-size: 13px; line-height: 24px; color: #000; white-space: nowrap; }
.keys .g { background: #00ac32; border-color: #5fd987 #04601d #04601d #5fd987; }
.keys .b { background: #00b2ff; border-color: #8fe0ff #035b85 #035b85 #8fe0ff; }
.keys .r { background: #f00c0c; border-color: #ff8080 #8a0606 #8a0606 #ff8080; }
.keys .y { background: #f9df12; border-color: #fff3a0 #8f8006 #8f8006 #fff3a0; }
.frame { border: 3px solid #f00; background: #000; padding: 10px 4px 0; }
table { width: 100%; table-layout: fixed; border-collapse: separate; border-spacing: 0; border: 1px solid #fff; border-color: #99997f #fff #fff #99997f; padding: 1px 1px 3px 0; }
.c1 { width: 175px; }
.c2 { width: 159px; }
.c3 { width: 177px; }
tr { height: 31px; }
th, td { padding: 0 10px 0 7px; border-bottom: 1px solid #555; font-size: 11px; line-height: 16px; font-weight: 400; text-align: left; white-space: nowrap; }
th { background: #bbb; color: #000; border-bottom-color: #888; }
td { background: #000; text-align: right; border-right: 1px solid #444; }
.cap { height: 30px; }
.cap th { background: #333; color: #fff; border-top: 1px solid #fff; border-bottom-color: #555; }
.first { height: 28px; }
.first th { border-top: 0; }
.last { height: 27px; }
.led { position: relative; display: inline-block; font: italic 15px/16px "DejaVu Sans Mono", monospace; color: #0f0; white-space: pre; z-index: 1; }
.led::before { content: attr(data-off); position: absolute; right: 0; top: 0; color: #3a364a; z-index: -1; }
.sm { font-size: 13px; }
.in { margin-right: 6px; }
.dash { background: linear-gradient(#fff, #fff) right 20px / 10px 1px no-repeat #000; }
.pct { color: #fff; font-size: 8px; margin-left: 3px; }
td.mid { padding: 0; }
.lamp { display: block; margin: 0 auto; width: 14px; height: 14px; border-radius: 50%; border: 1px solid #999; background: radial-gradient(circle at 35% 35%, #cfc 0 10%, #2e3 30%, #0c1 70%, #071); }
.slide { display: block; margin: 7px 0 0 -4px; width: 59px; height: 18px; background: #cfdccf; border-radius: 0 5px 0 0; font-size: 8px; font-weight: 700; color: #000; white-space: nowrap; }
.hatch { flex: 1; background: repeating-linear-gradient(135deg, #929297 0 2px, #aeaeb1 2px 5px); border-top: 1px dashed #fff; }
.vs, .hs { display: flex; background: #f0f0f0; align-items: center; gap: 2px; }
.vs { flex-direction: column; padding: 2px 0; }
.hs { padding: 0 2px; }
.vs svg, .hs svg { width: 8px; height: 8px; }
.track { flex: 1; display: flex; align-self: stretch; }
.vs .track { flex-direction: column; padding: 0 1px; }
.vs .track::before { content: ""; flex: 159; }
.vs .thumb { flex: 223; background: #a6a6a6; }
.vs .track::after { content: ""; flex: 158; }
.hs .track::before { content: ""; flex: 237; }
.hs .thumb { flex: 790; background: #a6a6a6; }

.docks { display: flex; align-items: flex-start; gap: 1px; padding: 0 1px; }
.dock { width: 16px; display: flex; flex-direction: column; align-items: center; padding-top: 4px; border: 1px solid #fff; border-right-color: #bbb; border-bottom-color: #bbb; background: #f3f3f3; }
.dock.low { margin-top: 270px; }
.dock button { width: 14px; height: 15px; display: grid; place-items: center; }
.dock svg { width: 12px; height: 12px; }
.dock i { width: 14px; height: 1px; margin: 1px 0; background: #bbb; }
.dock button.tail { height: 8px; }
.dock .tail svg { height: 8px; }
.dock .dxf { font: 7px/15px "Liberation Sans", sans-serif; }

.bottom { height: 18px; }
.coords { gap: 6px; padding-left: 4px; }
.coords .num { width: 34px; background: #f3f3f3; border-color: #ddd; }
.status { height: 13px; display: flex; justify-content: flex-end; gap: 2px; line-height: 11px; }
.status span { border: 1px solid #aaa; border-right-color: #fff; border-bottom: 0; padding: 0 2px; }
.status .pos { font-family: "Liberation Sans", sans-serif; }
```
